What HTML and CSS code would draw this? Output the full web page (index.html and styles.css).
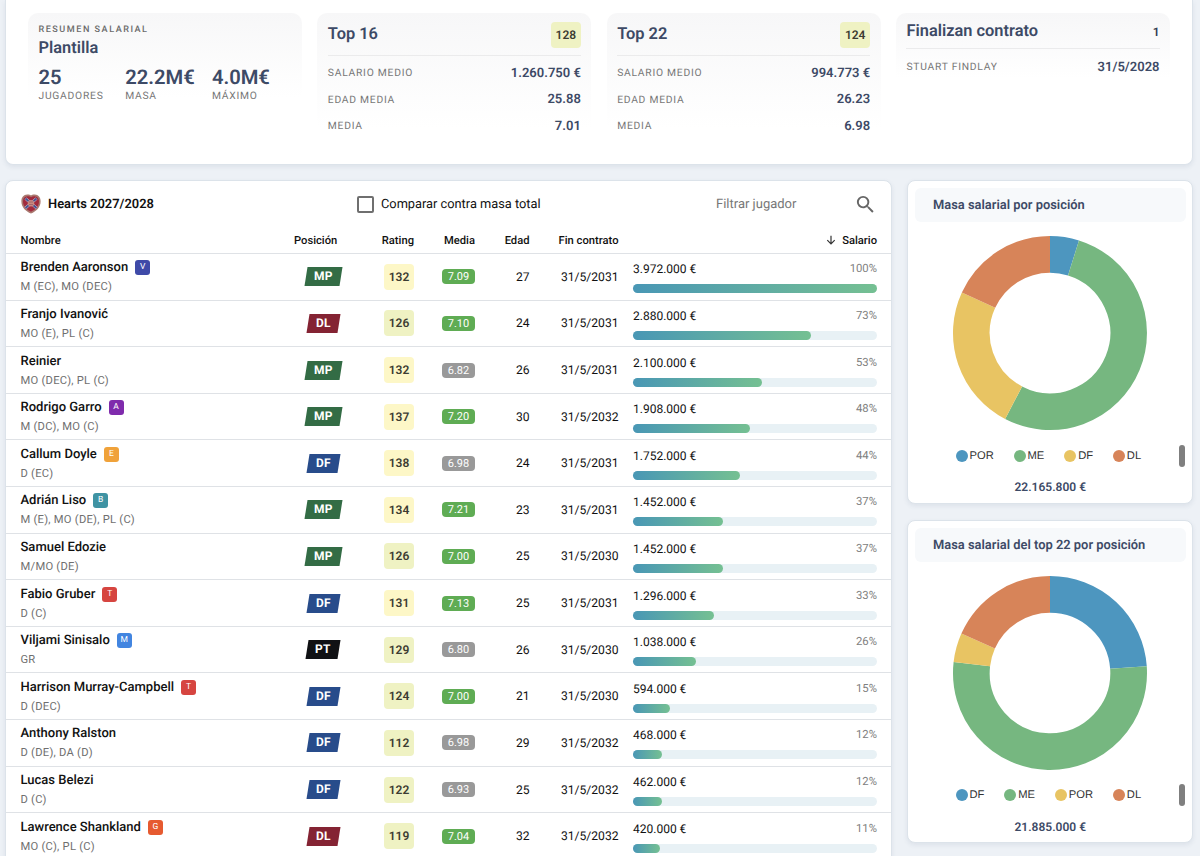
FILE: index.html
```
<!DOCTYPE html>
<html lang="es">
<head>
    <meta charset="UTF-8">
    <meta name="viewport" content="width=device-width, initial-scale=1.0">
    <title>Hearts 2027/2028 - Salarios</title>
    <link rel="stylesheet" href="styles.css">
</head>
<body>
    <section class="card summary">
        <div class="summary-box">
            <div class="overline">Resumen salarial</div>
            <h2 class="squad-title">Plantilla</h2>
            <div class="kpis">
                <div><div class="kpi">25</div><div class="label">Jugadores</div></div>
                <div><div class="kpi">22.2M€</div><div class="label">Masa</div></div>
                <div><div class="kpi">4.0M€</div><div class="label">Máximo</div></div>
            </div>
        </div>
        <div class="summary-box">
            <div class="box-head"><h2>Top 16</h2><span class="rating r-mid">128</span></div>
            <div class="line"><span class="label">Salario medio</span><b>1.260.750 €</b></div>
            <div class="line"><span class="label">Edad media</span><b>25.88</b></div>
            <div class="line"><span class="label">Media</span><b>7.01</b></div>
        </div>
        <div class="summary-box">
            <div class="box-head"><h2>Top 22</h2><span class="rating r-mid">124</span></div>
            <div class="line"><span class="label">Salario medio</span><b>994.773 €</b></div>
            <div class="line"><span class="label">Edad media</span><b>26.23</b></div>
            <div class="line"><span class="label">Media</span><b>6.98</b></div>
        </div>
        <div class="summary-box">
            <div class="box-head short"><h2>Finalizan contrato</h2><span class="count">1</span></div>
            <div class="line"><span class="label">Stuart Findlay</span><b>31/5/2028</b></div>
        </div>
    </section>

    <main class="content">
        <section class="card players">
            <div class="toolbar">
                <div class="team">
                    <svg class="crest" viewBox="0 0 20 20">
                        <path d="M10 19.600C4.800 17.300.4 13.500.4 7.500.4 3.300 2.600.9 6.200.6 8 .5 9 .9 10 1.500c1-.6 2-1 3.800-.9 3.600.3 5.800 2.700 5.800 6.900 0 6-4.400 9.800-9.600 12.100z" fill="#a9786f"/>
                        <path d="M10 17.800C5.500 15.700 2 12.300 2 7.600 2 4.300 3.600 2.500 6.400 2.300 8 2.200 9 2.600 10 3.200c1-.6 2-1 3.600-.9C16.400 2.500 18 4.300 18 7.600c0 4.700-3.500 8.100-8 10.200z" fill="#a12a3d"/>
                        <path d="M4.500 4.500l11 9.500M15.500 4.500l-11 9.500" stroke="#d9d3e3" stroke-width="2.800"/>
                        <path d="M4.500 4.500l11 9.500M15.500 4.500l-11 9.500" stroke="#48538f" stroke-width="2"/>
                        <circle cx="10" cy="9.200" r="3.200" fill="#c98a80"/>
                        <path d="M8 8h4M8 10.500h4" stroke="#9a5d68" stroke-width=".8"/>
                    </svg>
                    <h3>Hearts 2027/2028</h3>
                </div>
                <label class="compare"><span class="checkbox"></span><span class="compare-text">Comparar contra masa total</span></label>
                <div class="filter">
                    <span>Filtrar jugador</span>
                    <svg class="search" viewBox="0 0 24 24"><path d="M15.500 14h-.79l-.28-.27A6.471 6.471 0 0 0 16 9.500 6.500 6.500 0 1 0 9.500 16c1.610 0 3.090-.59 4.230-1.570l.27.28v.79l5 4.990L20.490 19l-4.990-5zm-6 0C7.010 14 5 11.990 5 9.500S7.010 5 9.500 5 14 7.010 14 9.500 11.990 14 9.500 14z"/></svg>
                </div>
            </div>
            <div class="row head">
                <span>Nombre</span>
                <span>Posición</span>
                <span class="right">Rating</span>
                <span class="right">Media</span>
                <span class="right">Edad</span>
                <span class="right">Fin contrato</span>
                <span class="sorted">
                    <svg viewBox="0 0 10 10"><path d="M5 .8v8M1.300 5.200L5 8.900l3.700-3.700"/></svg>
                    Salario
                </span>
            </div>
            <div id="rows"></div>
        </section>

        <aside class="charts">
            <section class="card chart">
                <h4>Masa salarial por posición</h4>
                <svg class="donut" viewBox="0 0 196 196" id="donut1"></svg>
                <div class="legend">
                    <span><i class="dot c1"></i>POR</span>
                    <span><i class="dot c2"></i>ME</span>
                    <span><i class="dot c3"></i>DF</span>
                    <span><i class="dot c4"></i>DL</span>
                    <i class="thumb"></i>
                </div>
                <div class="total">22.165.800 €</div>
            </section>
            <section class="card chart">
                <h4>Masa salarial del top 22 por posición</h4>
                <svg class="donut" viewBox="0 0 196 196" id="donut2"></svg>
                <div class="legend">
                    <span><i class="dot c1"></i>DF</span>
                    <span><i class="dot c2"></i>ME</span>
                    <span><i class="dot c3"></i>POR</span>
                    <span><i class="dot c4"></i>DL</span>
                    <i class="thumb"></i>
                </div>
                <div class="total">21.885.000 €</div>
            </section>
        </aside>
    </main>

    <script>
        // nombre, etiqueta, posiciones, demarcación, rating, media, edad, fin, salario, %
        const players = [
            ['Brenden Aaronson', 'V', 'M (EC), MO (DEC)', 'MP', 132, '7.09', 27, '31/5/2031', '3.972.000', 100],
            ['Franjo Ivanović', '', 'MO (E), PL (C)', 'DL', 126, '7.10', 24, '31/5/2031', '2.880.000', 73],
            ['Reinier', '', 'MO (DEC), PL (C)', 'MP', 132, '6.82', 26, '31/5/2031', '2.100.000', 53],
            ['Rodrigo Garro', 'A', 'M (DC), MO (C)', 'MP', 137, '7.20', 30, '31/5/2032', '1.908.000', 48],
            ['Callum Doyle', 'E', 'D (EC)', 'DF', 138, '6.98', 24, '31/5/2031', '1.752.000', 44],
            ['Adrián Liso', 'B', 'M (E), MO (DE), PL (C)', 'MP', 134, '7.21', 23, '31/5/2031', '1.452.000', 37],
            ['Samuel Edozie', '', 'M/MO (DE)', 'MP', 126, '7.00', 25, '31/5/2030', '1.452.000', 37],
            ['Fabio Gruber', 'T', 'D (C)', 'DF', 131, '7.13', 25, '31/5/2031', '1.296.000', 33],
            ['Viljami Sinisalo', 'M', 'GR', 'PT', 129, '6.80', 26, '31/5/2030', '1.038.000', 26],
            ['Harrison Murray-Campbell', 'T', 'D (DEC)', 'DF', 124, '7.00', 21, '31/5/2030', '594.000', 15],
            ['Anthony Ralston', '', 'D (DE), DA (D)', 'DF', 112, '6.98', 29, '31/5/2032', '468.000', 12],
            ['Lucas Belezi', '', 'D (C)', 'DF', 122, '6.93', 25, '31/5/2032', '462.000', 12],
            ['Lawrence Shankland', 'G', 'MO (C), PL (C)', 'DL', 119, '7.04', 32, '31/5/2032', '420.000', 11]
        ];

        document.getElementById('rows').innerHTML = players.map(p => {
            const [name, tag, roles, pos, rating, avg, age, end, salary, pct] = p;
            return `
            <div class="row">
                <div>
                    <div class="name">${name}${tag ? `<span class="tag tag-${tag}">${tag}</span>` : ''}</div>
                    <div class="roles">${roles}</div>
                </div>
                <div class="center"><span class="pos pos-${pos}"><em>${pos}</em></span></div>
                <div class="right"><span class="rating ${rating > 130 ? 'r-high' : 'r-mid'}">${rating}</span></div>
                <div class="right"><span class="avg ${avg >= 7 ? 'good' : ''}">${avg}</span></div>
                <div class="right">${age}</div>
                <div class="right">${end}</div>
                <div class="salary">
                    <div class="amount"><span>${salary} €</span><span class="pct">${pct}%</span></div>
                    <div class="bar"><div class="fill" style="width: ${pct}%"></div></div>
                </div>
            </div>`;
        }).join('');

        const colors = ['#4d96bf', '#76b780', '#e8c463', '#d78459'];

        // punto del anillo para un porcentaje acumulado
        function ringPoint(pct, r) {
            const a = pct / 100 * 2 * Math.PI;
            return (98 + r * Math.sin(a)).toFixed(2) + ' ' + (98 - r * Math.cos(a)).toFixed(2);
        }

        function drawDonut(id, values) {
            const r = 78.65;
            let start = 0;
            document.getElementById(id).innerHTML = values.map((v, i) => {
                const end = start + v;
                const d = `M${ringPoint(start, r)} A${r} ${r} 0 ${v > 50 ? 1 : 0} 1 ${ringPoint(end, r)}`;
                start = end;
                return `<path d="${d}" fill="none" stroke="${colors[i]}" stroke-width="36.7"/>`;
            }).join('');
        }

        drawDonut('donut1', [4.83, 52.82, 24.2, 18.15]);
        drawDonut('donut2', [23.9, 52.9, 4.86, 18.34]);
    </script>
</body>
</html>
```
FILE: styles.css
```
* { box-sizing: border-box; }
body {
    margin: 0;
    height: 856px;
    overflow: hidden;
    padding: 0 7px 0 5px;
    background-color: #edf1f6;
    font-family: Roboto, "Liberation Sans", sans-serif;
    font-size: 13px;
    text-rendering: geometricPrecision;
    color: #111;
}
h2, h3, h4 { margin: 0; }
.card { background-color: #fff; border: 1px solid #dce3ea; border-radius: 8px; box-shadow: 0 2px 5px rgba(60,80,110,0.09); }

/* resumen */
.summary {
    height: 165px;
    border-top: none;
    border-radius: 0 0 8px 8px;
    padding: 13px 22px 0;
    display: grid;
    grid-template-columns: repeat(4, minmax(0, 1fr));
    gap: 15.3px;
    align-items: start;
}
.summary-box { padding: 9px 10.5px; border-radius: 10px; background: linear-gradient(#f7f7f8, #fff 85%); }
.summary h2 { font-size: 16.4px; line-height: 20px; font-weight: 600; color: #3d4a66; }
.overline { padding-top: 1px; font-size: 9.1px; line-height: 14px; font-weight: 500; letter-spacing: 1.5px; text-transform: uppercase; color: #6b6b6b; }
.label { font-size: 10.3px; line-height: 14px; letter-spacing: 0.75px; text-transform: uppercase; color: #777; }
.summary .squad-title { margin-top: 2px; }
.kpis { display: grid; grid-template-columns: repeat(3, 86.7px); margin-top: 7px; }
.kpi { font-size: 20.2px; line-height: 23px; font-weight: 600; color: #3d4a66; }
.box-head { height: 34px; display: flex; justify-content: space-between; align-items: center; padding-bottom: 8px; border-bottom: 1px solid #ebebec; margin-bottom: 4px; }
.box-head.short { height: 27px; padding-bottom: 7px; margin-bottom: 5px; }
.count { font-size: 12px; font-weight: 600; color: #333c52; }
.line { height: 26.5px; display: flex; justify-content: space-between; align-items: center; }
.line b { font-weight: 600; color: #3d4a66; }

.rating { display: inline-block; width: 30px; height: 26px; line-height: 26px; border-radius: 4px; text-align: center; font-size: 12px; font-weight: 600; color: #3c3c32; }
.r-mid { background-color: #eff2c3; }
.r-high { background-color: #fdf7c7; }

/* tabla */
.content { display: flex; justify-content: space-between; align-items: flex-start; height: 676px; margin-top: 15px; }
.players { width: 887px; height: 720px; }
.toolbar { height: 46px; padding: 0 15px 0 14.5px; display: grid; grid-template-columns: 336.5px 1fr 160px; align-items: center; }
.team, .compare, .filter { display: flex; align-items: center; }
.team h3 { padding-top: 1px; font-size: 12.9px; font-weight: 600; }
.crest { width: 20px; height: 20px; margin-right: 7.5px; }
.checkbox { width: 17px; height: 17px; border: 2px solid #6f6f6f; border-radius: 2px; margin-right: 7px; }
.compare-text { padding-top: 1px; font-size: 12.8px; }
.filter { justify-content: space-between; color: #777; }
.search { width: 23px; height: 23px; fill: #666; margin-right: -1px; }
.row {
    height: 46.62px;
    padding: 0 14px 0 14.5px;
    display: grid;
    grid-template-columns: 273.5px 58px 62px 61px 54.5px 89px 1fr;
    align-items: center;
    border-bottom: 1px solid #dfe2e6;
    font-size: 12.1px;
}
.row.head { height: 27px; padding-top: 1px; font-size: 11.2px; font-weight: 500; }
.right { text-align: right; }
.center { text-align: center; }
.sorted { text-align: right; }
.sorted svg { width: 10px; height: 10px; margin-right: 3px; vertical-align: -1px; fill: none; stroke: #333; stroke-width: 1.200; }
.name { display: flex; align-items: center; font-size: 13px; font-weight: 500; height: 19px; }
.roles { margin-top: 1px; font-size: 11.2px; line-height: 18px; letter-spacing: 0.25px; color: #6f6f6f; }
.row > div:first-child { padding-top: 1px; }
.tag { width: 15px; height: 15px; line-height: 15px; margin-left: 7px; border-radius: 3px; text-align: center; font-size: 8.5px; font-weight: 400; color: #fff; }
.tag-V { background-color: #3f4aa8; }
.tag-A { background-color: #7f2bac; }
.tag-E { background-color: #f0a23a; }
.tag-B { background-color: #3f93a3; }
.tag-T { background-color: #d64540; }
.tag-M { background-color: #4285e0; }
.tag-G { background-color: #e65a30; }
.pos { display: inline-block; padding: 0 8px; height: 19px; line-height: 19px; transform: skewX(-9deg); color: #fff; font-size: 12px; font-weight: 700; letter-spacing: 0.2px; }
.pos em { display: inline-block; font-style: normal; transform: skewX(9deg); }
.pos-MP { background-color: #336c45; }
.pos-DL { background-color: #842333; }
.pos-DF { background-color: #284c8b; }
.pos-PT { background-color: #101114; }
.avg { display: inline-block; width: 33px; height: 15px; line-height: 15px; border-radius: 4px; text-align: center; font-size: 11px; color: #fff; background-color: #999; }
.avg.good { background-color: #5fac54; }
.salary { padding: 1px 0 0 14.5px; }
.amount { display: flex; justify-content: space-between; font-size: 12px; line-height: 16px; }
.pct { font-size: 11.3px; color: #808080; }
.bar { height: 9px; margin-top: 7px; border-radius: 5px; background-color: #e8f1f5; }
.fill { height: 9px; border-radius: 5px; background: linear-gradient(90deg, #4997b5, #75c092); }

/* gráficos */
.charts { width: 286px; display: flex; flex-direction: column; gap: 16px; }
.chart { height: 323.5px; padding: 7px 6.5px 7px 7px; display: flex; flex-direction: column; align-items: center; }
.chart h4 { width: 100%; height: 34px; line-height: 35px; padding-left: 18px; border-radius: 6px; background-color: #f7f9fb; font-size: 12.9px; font-weight: 600; color: #3d4a66; }
.donut { width: 196px; height: 196px; margin-top: 13px; }
.legend { width: 100%; height: 22px; margin-top: 13.5px; padding-left: 40.5px; display: flex; align-items: center; gap: 19.8px; font-family: "Liberation Sans", sans-serif; font-size: 11.2px; color: #333; }
.legend span { display: flex; align-items: center; }
.dot { width: 12px; height: 12px; border-radius: 50%; margin-right: 2px; }
.c1 { background-color: #4d96bf; }
.c2 { background-color: #76b780; }
.c3 { background-color: #e8c463; }
.c4 { background-color: #d78459; }
.thumb { width: 6px; height: 22px; margin-left: auto; margin-right: 1px; border-radius: 3px; background-color: #7f7f7f; }
.total { margin-top: 12.5px; line-height: 16px; font-size: 12px; font-weight: 600; color: #3d4a66; }
```
